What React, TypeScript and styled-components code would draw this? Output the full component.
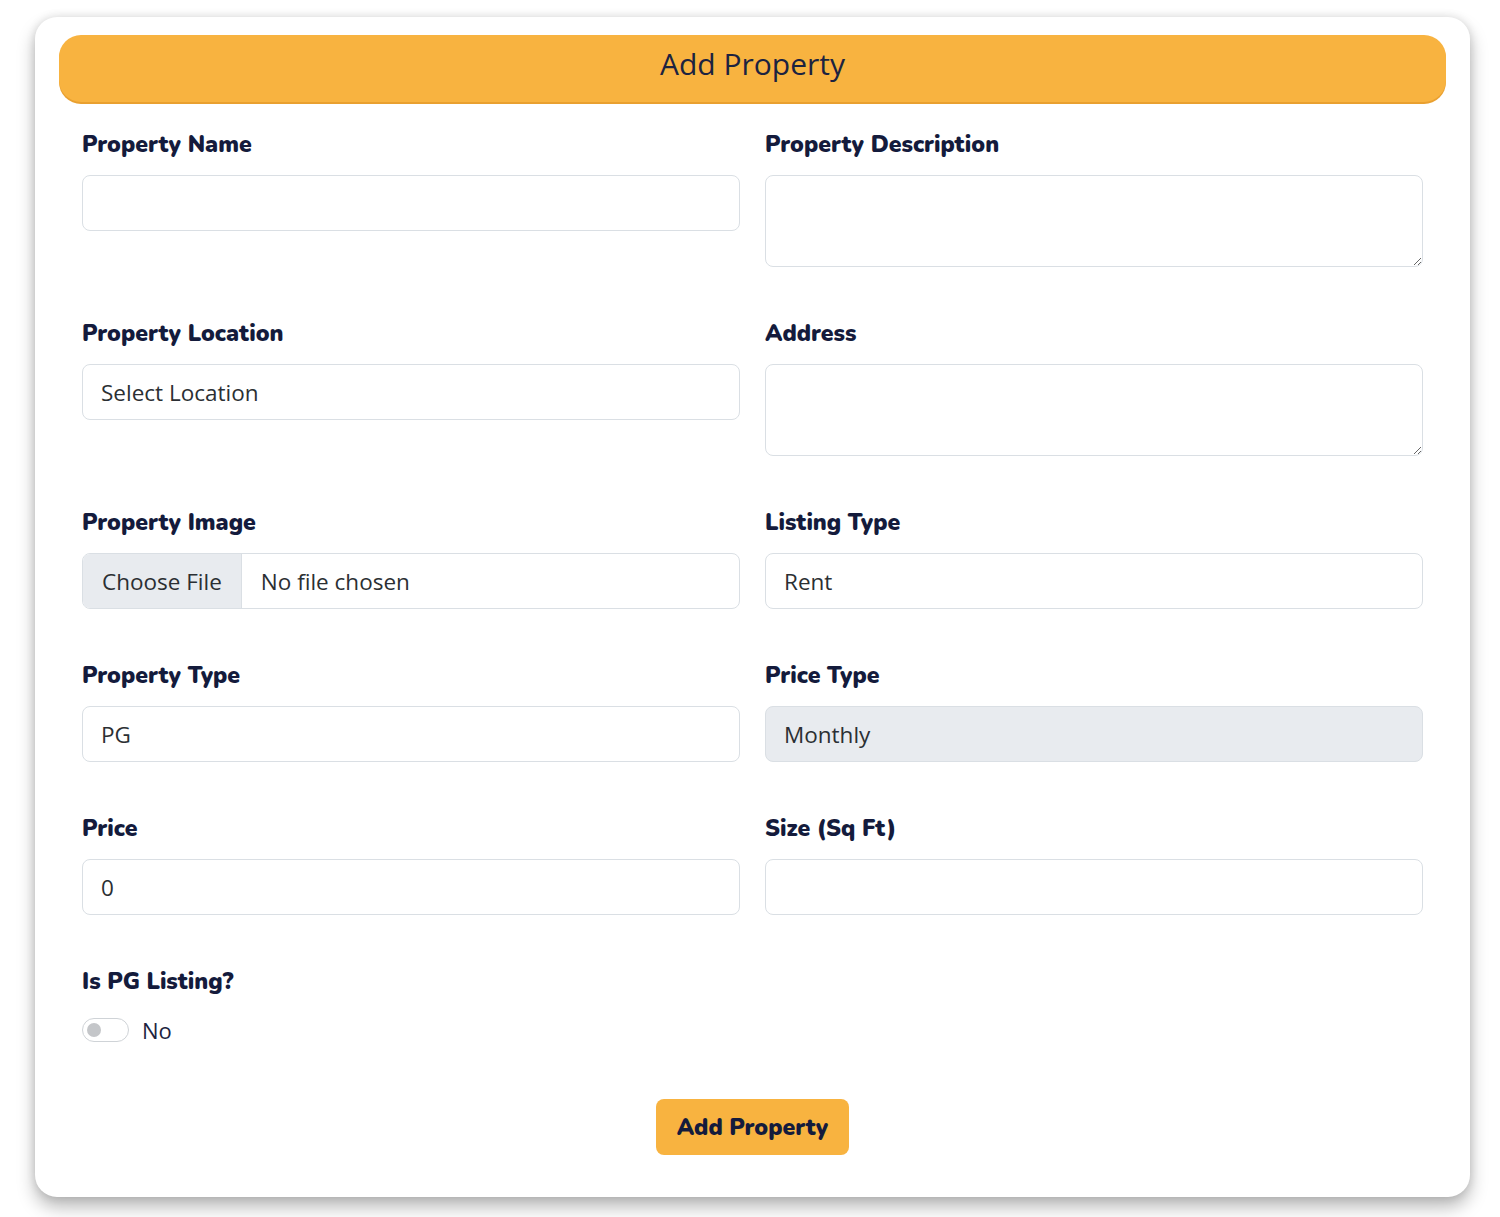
import React from "react";
import styled, { createGlobalStyle } from "styled-components";

const Global = createGlobalStyle`
  html, body { margin: 0; padding: 0; background: #ffffff; }
  body { font-family: "Open Sans", "Noto Sans", sans-serif; }
  * { box-sizing: border-box; }
`;

const Page = styled.div`
  padding: 17px 30px 20px 35px;
`;

const Card = styled.div`
  background: #fff;
  border-radius: 22px;
  padding: 18px 24px 42px 24px;
  box-shadow: 0 10px 18px rgba(0, 0, 0, 0.28), 0 0 10px rgba(0, 0, 0, 0.12);
  display: flex;
  flex-direction: column;
`;

const Header = styled.div`
  background: #f8b340;
  border-radius: 22px;
  height: 67px;
  padding-bottom: 10px;
  display: flex;
  align-items: center;
  justify-content: center;
  box-shadow: 0 2px 0 #e9a030;
  font-family: "Open Sans", "Noto Sans", sans-serif;
  font-size: 30px;
  font-weight: 500;
  color: #1c2340;
`;

const Form = styled.form`
  padding: 28px 23px 0 23px;
  display: flex;
  flex-direction: column;
`;

const Grid = styled.div`
  display: grid;
  grid-template-columns: 1fr 1fr;
  column-gap: 25px;
  row-gap: 52px;
  align-items: start;
`;

const Field = styled.div`
  display: flex;
  flex-direction: column;
`;

const Label = styled.label`
  font-family: "Nunito", "Lato", sans-serif;
  font-weight: 900;
  font-size: 23px;
  line-height: 30px;
  color: #141b3c;
  margin-bottom: 15px;
`;

const inputBase = `
  width: 100%;
  border: 1.5px solid #dadfe4;
  border-radius: 8px;
  font-family: "Open Sans", "Noto Sans", sans-serif;
  font-size: 22.5px;
  color: #2b2f33;
  padding: 0 18px;
  outline: none;
`;

const Input = styled.input<{ $disabled?: boolean }>`
  ${inputBase}
  height: 56px;
  background: ${(p) => (p.$disabled ? "#e8ebef" : "#fff")};
`;

const Select = styled.div`
  ${inputBase}
  height: 56px;
  display: flex;
  align-items: center;
  background: #fff;
`;

const TextArea = styled.textarea`
  ${inputBase}
  height: 92px;
  padding: 10px 18px;
  resize: vertical;
  background: #fff;
`;

const FileBox = styled.div`
  ${inputBase}
  height: 56px;
  padding: 0;
  display: flex;
  align-items: stretch;
  overflow: hidden;
`;

const FileButton = styled.div`
  background: #e8ebef;
  border-right: 1.5px solid #dadfe4;
  padding: 0 19px;
  display: flex;
  align-items: center;
  color: #2b2f33;
`;

const FileName = styled.div`
  padding: 0 19px;
  display: flex;
  align-items: center;
`;

const SwitchBlock = styled.div`
  margin-top: 52px;
  display: flex;
  flex-direction: column;
`;

const SwitchRow = styled.div`
  display: flex;
  align-items: center;
  gap: 13px;
  margin-top: 3px;
`;

const Switch = styled.div`
  width: 47px;
  height: 24px;
  border: 1.5px solid #cfd3d7;
  border-radius: 12px;
  position: relative;
  background: #fff;
  &::after {
    content: "";
    position: absolute;
    left: 4px;
    top: 3.5px;
    width: 14px;
    height: 14px;
    border-radius: 50%;
    background: #c4c6c9;
  }
`;

const SwitchText = styled.span`
  font-family: "Open Sans", "Noto Sans", sans-serif;
  font-size: 22px;
  color: #1c2340;
`;

const ButtonRow = styled.div`
  display: flex;
  justify-content: center;
  margin-top: 54px;
`;

const Button = styled.button`
  background: #f8b340;
  border: none;
  border-radius: 8px;
  width: 193px;
  height: 56px;
  font-family: "Nunito", "Lato", sans-serif;
  font-weight: 900;
  font-size: 23px;
  color: #141b3c;
  cursor: pointer;
`;

export default function App() {
  return (
    <>
      <Global />
      <Page>
        <Card>
          <Header>Add Property</Header>
          <Form onSubmit={(e) => e.preventDefault()}>
            <Grid>
              <Field>
                <Label>Property Name</Label>
                <Input />
              </Field>
              <Field>
                <Label>Property Description</Label>
                <TextArea />
              </Field>
              <Field>
                <Label>Property Location</Label>
                <Select>Select Location</Select>
              </Field>
              <Field>
                <Label>Address</Label>
                <TextArea />
              </Field>
              <Field>
                <Label>Property Image</Label>
                <FileBox>
                  <FileButton>Choose File</FileButton>
                  <FileName>No file chosen</FileName>
                </FileBox>
              </Field>
              <Field>
                <Label>Listing Type</Label>
                <Select>Rent</Select>
              </Field>
              <Field>
                <Label>Property Type</Label>
                <Select>PG</Select>
              </Field>
              <Field>
                <Label>Price Type</Label>
                <Input $disabled readOnly value="Monthly" />
              </Field>
              <Field>
                <Label>Price</Label>
                <Input defaultValue="0" />
              </Field>
              <Field>
                <Label>Size (Sq Ft)</Label>
                <Input />
              </Field>
            </Grid>
            <SwitchBlock>
              <Label>Is PG Listing?</Label>
              <SwitchRow>
                <Switch />
                <SwitchText>No</SwitchText>
              </SwitchRow>
            </SwitchBlock>
            <ButtonRow>
              <Button type="button">Add Property</Button>
            </ButtonRow>
          </Form>
        </Card>
      </Page>
    </>
  );
}
